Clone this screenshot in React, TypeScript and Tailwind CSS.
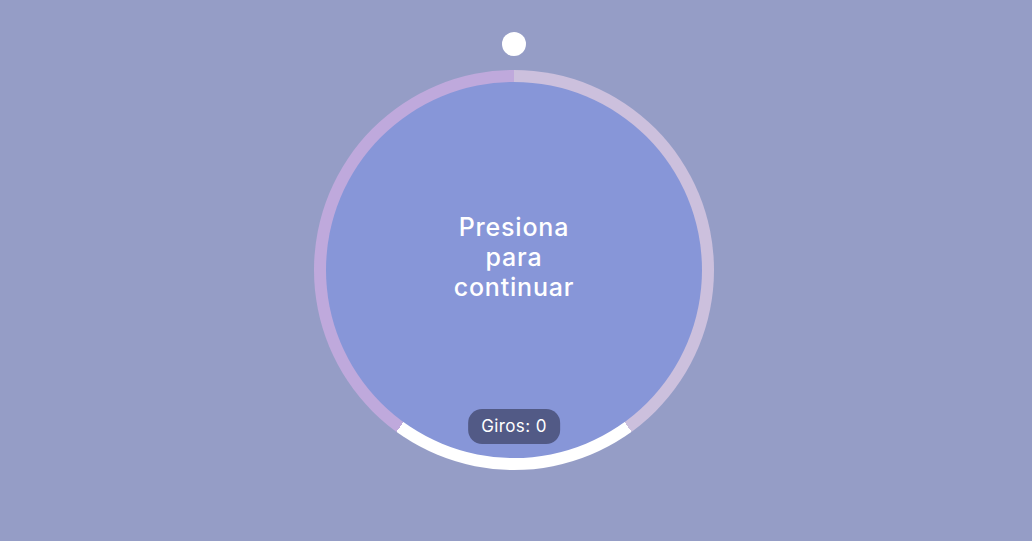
const App = () => {
  const giros = 0;
  return (
    <div className="h-[541px] w-full bg-[#959dc6] flex flex-col items-center pt-[32px] pr-[4px] font-['Inter','Open_Sans',sans-serif]">
      <div className="w-6 h-6 rounded-full bg-white" />
      <div className="mt-[14px] w-[400px] h-[400px] rounded-full p-[12px] bg-[conic-gradient(#ccc0dd_0deg_144deg,#ffffff_144deg_216deg,#bfa9dc_216deg_360deg)]">
        <div className="relative w-full h-full rounded-full bg-[#8796d8] flex items-center justify-center">
          <p className="-mt-[26px] text-center text-white text-[25px] leading-[30px] font-medium tracking-[0.8px]">
            Presiona
            <br />
            para
            <br />
            continuar
          </p>
          <div className="absolute bottom-[14px] left-1/2 -translate-x-1/2 h-[35px] px-[13px] rounded-[14px] bg-[#525a86] flex items-center text-white text-[17px] tracking-[0.4px]">
            Giros: {giros}
          </div>
        </div>
      </div>
    </div>
  );
};

export default App;
